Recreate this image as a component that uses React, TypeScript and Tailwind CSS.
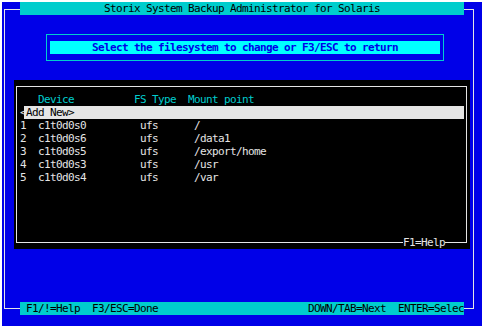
import React from 'react';

const rows = [
  { n: '1', dev: 'c1t0d0s0', fs: 'ufs', mount: '/' },
  { n: '2', dev: 'c1t0d0s6', fs: 'ufs', mount: '/data1' },
  { n: '3', dev: 'c1t0d0s5', fs: 'ufs', mount: '/export/home' },
  { n: '4', dev: 'c1t0d0s3', fs: 'ufs', mount: '/usr' },
  { n: '5', dev: 'c1t0d0s4', fs: 'ufs', mount: '/var' },
];

const mono = "font-['DejaVu_Sans_Mono','Liberation_Mono',monospace] text-[11px] leading-[13px] tracking-[-0.62px] whitespace-pre";

export default function App() {
  return (
    <div className={`w-[484px] h-[329px] bg-white p-[2px] ${mono}`}>
      <div className="w-[480px] h-[324px] bg-[#0000e8] pt-[7px] pl-[2px]">
        {/* outer frame */}
        <div className="w-[470px] h-[300px] border border-[#e5e5e5] flex flex-col">
          {/* title bar */}
          <div className="-mt-[8px] ml-[15px] w-[444px] h-[13px] bg-[#00cdcd] text-black text-center">
            Storix System Backup Administrator for Solaris
          </div>

          {/* prompt box */}
          <div className="mt-[19px] ml-[41px] w-[398px] h-[27px] border border-[#00cdcd] px-[3px] py-[6px]">
            <div className="h-[13px] bg-[#00ffff] text-[#0000e8] font-bold text-center">
              Select the filesystem to change or F3/ESC to return
            </div>
          </div>

          {/* list panel */}
          <div className="mt-[19px] ml-[9px] w-[456px] h-[169px] bg-black pt-[6px] pl-[2px]">
            <div className="w-[451px] h-[157px] border border-[#e5e5e5] pl-[3px] pr-[2px] pt-[6px] flex flex-col">
              <div className="text-[#00cdcd]">{'   Device          FS Type  Mount point'}</div>
              <div className="h-[13px] bg-[#e5e5e5] text-black flex">
                <span className="w-[6px] bg-[linear-gradient(to_right,#000_0_4px,transparent_4px)] text-[#e5e5e5]">{'<'}</span>
                <span>Add New&gt;</span>
              </div>
              {rows.map((r) => (
                <div key={r.n} className="text-[#e5e5e5] flex">
                  <span className="w-[18px]">{r.n}</span>
                  <span className="w-[102px]">{r.dev}</span>
                  <span className="w-[54px]">{r.fs}</span>
                  <span>{r.mount}</span>
                </div>
              ))}
              <div className="mt-auto -mb-[7px] h-[13px] flex justify-end pr-[19px]">
                <span className="bg-black text-[#e5e5e5]">F1=Help</span>
              </div>
            </div>
          </div>

          {/* footer bar */}
          <div className="mt-auto -mb-[7px] ml-[15px] w-[444px] h-[13px] bg-[#00cdcd] text-black flex justify-between pl-[6px]">
            <span>F1/!=Help  F3/ESC=Done</span>
            <span>DOWN/TAB=Next  ENTER=Selec</span>
          </div>
        </div>
      </div>
    </div>
  );
}
